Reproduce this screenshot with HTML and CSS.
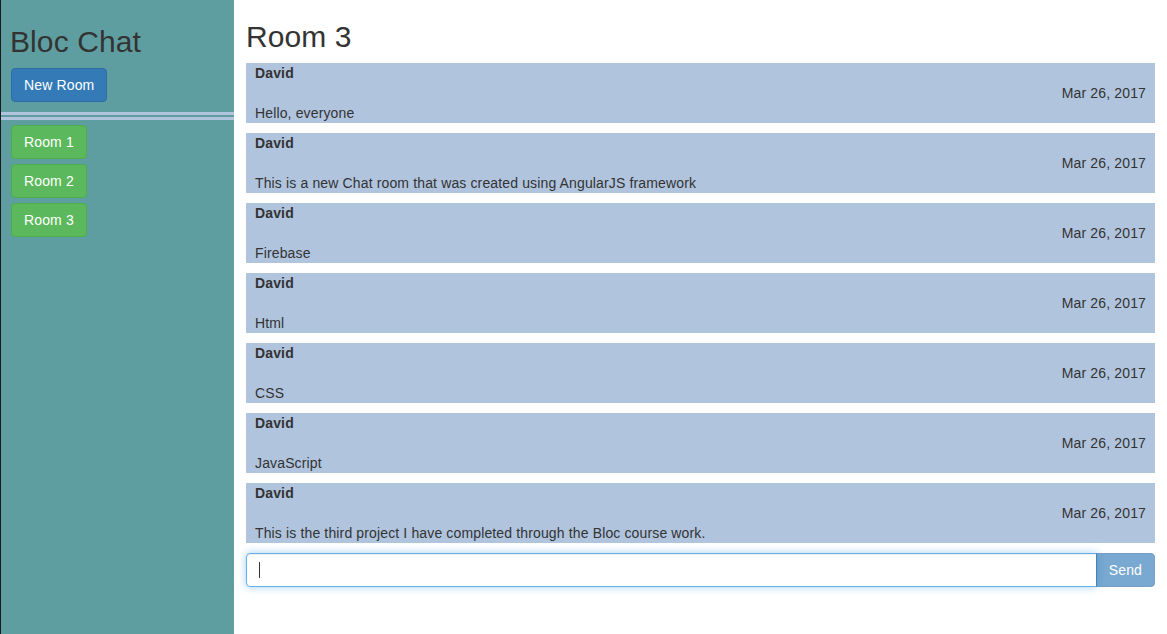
FILE: index.html
```html
<!DOCTYPE html>
<html lang="en">
<head>
<meta charset="utf-8">
<title>Bloc Chat</title>
<link rel="stylesheet" href="styles.css">
</head>
<body>
<div class="app">
  <aside class="sidebar">
    <h2 class="brand">Bloc Chat</h2>
    <button class="btn btn-primary new-room" type="button">New Room</button>
    <div class="divider"></div>
    <ul class="room-list">
      <li><button class="btn btn-success" type="button">Room 1</button></li>
      <li><button class="btn btn-success" type="button">Room 2</button></li>
      <li><button class="btn btn-success" type="button">Room 3</button></li>
    </ul>
  </aside>
  <main class="main">
    <h2 class="room-title">Room 3</h2>
    <div class="messages">
      <div class="message">
        <div class="author">David</div>
        <div class="date">Mar 26, 2017</div>
        <div class="content">Hello, everyone</div>
      </div>
      <div class="message">
        <div class="author">David</div>
        <div class="date">Mar 26, 2017</div>
        <div class="content">This is a new Chat room that was created using AngularJS framework</div>
      </div>
      <div class="message">
        <div class="author">David</div>
        <div class="date">Mar 26, 2017</div>
        <div class="content">Firebase</div>
      </div>
      <div class="message">
        <div class="author">David</div>
        <div class="date">Mar 26, 2017</div>
        <div class="content">Html</div>
      </div>
      <div class="message">
        <div class="author">David</div>
        <div class="date">Mar 26, 2017</div>
        <div class="content">CSS</div>
      </div>
      <div class="message">
        <div class="author">David</div>
        <div class="date">Mar 26, 2017</div>
        <div class="content">JavaScript</div>
      </div>
      <div class="message">
        <div class="author">David</div>
        <div class="date">Mar 26, 2017</div>
        <div class="content">This is the third project I have completed through the Bloc course work.</div>
      </div>
    </div>
    <form class="input-group" onsubmit="return false">
      <div class="input-wrap">
        <input class="form-control is-focused" type="text" aria-label="Message">
        <span class="caret-mark"></span>
      </div>
      <button class="btn btn-primary btn-send" type="submit" disabled>Send</button>
    </form>
  </main>
</div>
</body>
</html>
```

FILE: styles.css
```css
* {
  box-sizing: border-box;
}

html, body {
  margin: 0;
  padding: 0;
  height: 100%;
}

body {
  font-family: "Liberation Sans", Arial, Helvetica, sans-serif;
  font-size: 14px;
  line-height: 20px;
  letter-spacing: 0.14px;
  color: #333;
  background: #fff;
}

.app {
  display: flex;
  height: 634px;
}

.sidebar {
  width: 234px;
  flex: 0 0 234px;
  background: #5f9ea0;
  border-left: 1px solid #1a1a1a;
  display: flex;
  flex-direction: column;
}

.brand {
  margin: 25px 0 10px 9px;
  font-size: 30px;
  font-weight: 500;
  line-height: 33px;
  letter-spacing: 0.1px;
  color: #333;
}

.btn {
  display: inline-block;
  font-family: inherit;
  font-size: 14px;
  line-height: 20px;
  letter-spacing: 0.14px;
  padding: 6px 12px;
  border: 1px solid transparent;
  border-radius: 4px;
  color: #fff;
  cursor: pointer;
  white-space: nowrap;
}

.btn-primary {
  background: #337ab7;
  border-color: #2e6da4;
}

.btn-success {
  background: #5cb85c;
  border-color: #4cae4c;
}

.new-room {
  align-self: flex-start;
  margin-left: 10px;
}

.divider {
  margin-top: 10px;
  height: 8px;
  border-top: 8px double #b0c4de;
}

.room-list {
  list-style: none;
  margin: 5px 0 0;
  padding: 0 0 0 10px;
  display: flex;
  flex-direction: column;
  align-items: flex-start;
  gap: 5px;
}

.main {
  flex: 1;
  padding: 0 12px;
  display: flex;
  flex-direction: column;
}

.room-title {
  margin: 20px 0 10px;
  font-size: 30px;
  font-weight: 500;
  line-height: 33px;
  letter-spacing: 0.1px;
  color: #333;
}

.messages {
  display: flex;
  flex-direction: column;
  gap: 10px;
}

.message {
  background: #b0c4de;
  padding: 0 9px;
  height: 60px;
}

.author {
  font-weight: bold;
}

.date {
  text-align: right;
}

.input-group {
  margin: 10px 0 0;
  display: flex;
  height: 34px;
}

.input-wrap {
  position: relative;
  flex: 1;
  display: flex;
}

.form-control {
  flex: 1;
  height: 34px;
  padding: 6px 12px;
  font-family: inherit;
  font-size: 14px;
  line-height: 20px;
  color: #555;
  background: #fff;
  border: 1px solid #ccc;
  border-radius: 4px 0 0 4px;
  outline: none;
  caret-color: transparent;
}

.form-control.is-focused {
  border-color: #66afe9;
  box-shadow: inset 0 1px 1px rgba(0, 0, 0, .075), 0 0 8px rgba(102, 175, 233, .6);
}

.caret-mark {
  position: absolute;
  left: 13px;
  top: 9px;
  width: 1px;
  height: 16px;
  background: #333;
}

.btn-send {
  border-radius: 0 4px 4px 0;
  margin-left: -1px;
  opacity: .65;
  cursor: not-allowed;
  position: relative;
}
```
